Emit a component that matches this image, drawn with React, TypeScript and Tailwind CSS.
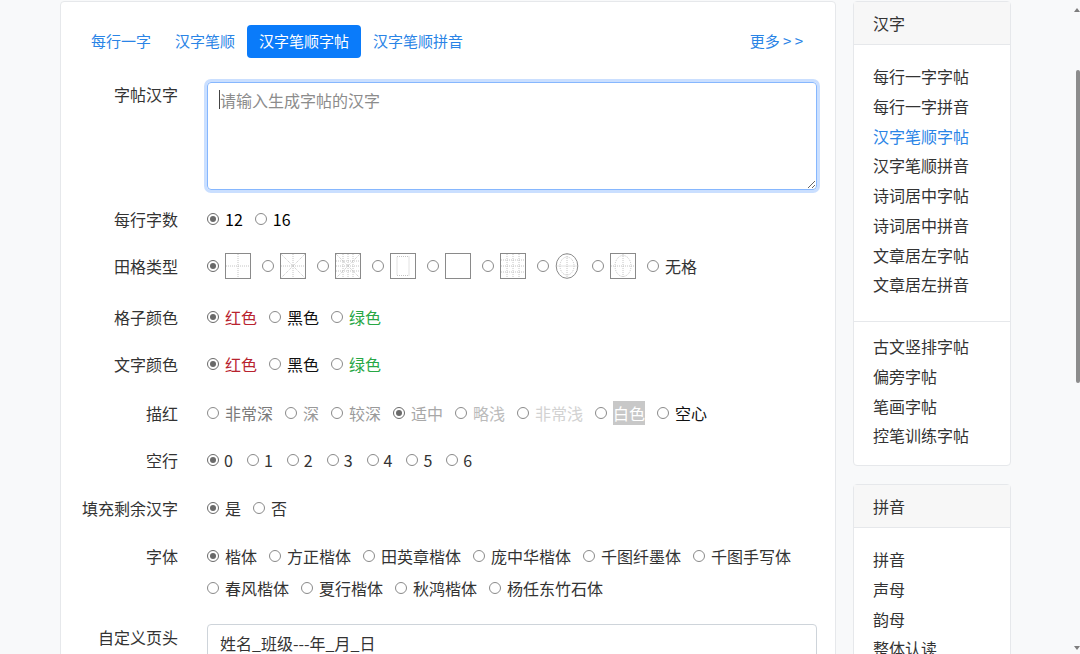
import React from "react";

const FONT = "font-['Noto_Sans_CJK_SC','Noto_Sans',sans-serif]";

function Radio({ checked = false }: { checked?: boolean }) {
  return (
    <span
      className={
        "inline-flex h-[12px] w-[12px] shrink-0 items-center justify-center rounded-full border bg-white " +
        (checked ? "border-[#6a6a6a] bg-[#ececec]" : "border-[#8a8a8a]")
      }
    >
      {checked && <span className="block h-[6px] w-[6px] rounded-full bg-[#6a6a6a]" />}
    </span>
  );
}

function Option({
  checked = false,
  children,
  className = "",
}: {
  checked?: boolean;
  children: React.ReactNode;
  className?: string;
}) {
  return (
    <label className="mr-[12px] inline-flex items-center gap-[6px] leading-6">
      <Radio checked={checked} />
      <span className={className}>{children}</span>
    </label>
  );
}

const dot = { stroke: "#b5b5b5", strokeWidth: 0.8, strokeDasharray: "1 1", fill: "none" } as const;
const frame = { stroke: "#8a8a8a", strokeWidth: 1, fill: "#fff" } as const;

function GridIcon({ kind }: { kind: number }) {
  if (kind === 6) {
    return (
      <svg width="26" height="26" viewBox="0 0 26 26">
        <ellipse cx="12" cy="13" rx="10.8" ry="12.3" {...frame} />
        <line x1="12" y1="1" x2="12" y2="25" {...dot} />
        <line x1="1.5" y1="13" x2="22.5" y2="13" {...dot} />
        <ellipse cx="12" cy="13" rx="7" ry="9" {...dot} />
      </svg>
    );
  }
  return (
    <svg width="26" height="26" viewBox="0 0 26 26">
      <rect x="0.5" y="0.5" width="25" height="25" {...frame} />
      {(kind === 0 || kind === 1 || kind === 2 || kind === 7) && (
        <>
          <line x1="13" y1="1" x2="13" y2="25" {...dot} />
          <line x1="1" y1="13" x2="25" y2="13" {...dot} />
        </>
      )}
      {(kind === 1 || kind === 2) && (
        <>
          <line x1="1" y1="1" x2="25" y2="25" {...dot} />
          <line x1="25" y1="1" x2="1" y2="25" {...dot} />
        </>
      )}
      {kind === 2 && (
        <>
          <line x1="8" y1="1" x2="8" y2="25" {...dot} />
          <line x1="18" y1="1" x2="18" y2="25" {...dot} />
          <line x1="1" y1="8" x2="25" y2="8" {...dot} />
          <line x1="1" y1="18" x2="25" y2="18" {...dot} />
        </>
      )}
      {kind === 3 && <rect x="7" y="3.5" width="12" height="19" {...dot} />}
      {kind === 5 && (
        <>
          <line x1="7" y1="1" x2="7" y2="25" {...dot} />
          <line x1="13" y1="1" x2="13" y2="25" {...dot} />
          <line x1="19" y1="1" x2="19" y2="25" {...dot} />
          <line x1="1" y1="7" x2="25" y2="7" {...dot} />
          <line x1="1" y1="13" x2="25" y2="13" {...dot} />
          <line x1="1" y1="19" x2="25" y2="19" {...dot} />
        </>
      )}
      {kind === 7 && <ellipse cx="13" cy="13" rx="8" ry="10.5" {...dot} />}
    </svg>
  );
}

function Row({
  label,
  mt,
  children,
  center = false,
}: {
  label: string;
  mt: string;
  children: React.ReactNode;
  center?: boolean;
}) {
  return (
    <div className={"flex " + (center ? "items-center " : "items-start ") + mt}>
      <div className="w-[116px] shrink-0 pr-[17px] text-right leading-6 text-[#333]">{label}</div>
      <div className="ml-[12px] flex flex-1 flex-wrap items-center">{children}</div>
    </div>
  );
}

const tabs = ["每行一字", "汉字笔顺", "汉字笔顺字帖", "汉字笔顺拼音"];

const hanziLinks = [
  "每行一字字帖",
  "每行一字拼音",
  "汉字笔顺字帖",
  "汉字笔顺拼音",
  "诗词居中字帖",
  "诗词居中拼音",
  "文章居左字帖",
  "文章居左拼音",
];
const moreLinks = ["古文竖排字帖", "偏旁字帖", "笔画字帖", "控笔训练字帖"];
const pinyinLinks = ["拼音", "声母", "韵母", "整体认读"];

const fonts1 = ["楷体", "方正楷体", "田英章楷体", "庞中华楷体", "千图纤墨体", "千图手写体"];
const fonts2 = ["春风楷体", "夏行楷体", "秋鸿楷体", "杨任东竹石体"];

export default function App() {
  return (
    <div className={"relative h-[654px] overflow-hidden bg-[#f8f9fa] text-[16px] " + FONT}>
      <div className="flex items-start gap-[17px] pl-[60px] pt-[1px]">
        {/* main form card */}
        <main className="h-[700px] w-[776px] shrink-0 rounded-[4px] border border-[#e6e8eb] bg-white px-[18px] pt-[23px]">
          <nav className="flex h-[33px] items-center text-[15px]">
            {tabs.map((t, i) => (
              <a
                key={t}
                className={
                  "flex h-[33px] items-center rounded-[4px] px-3 " +
                  (i === 2 ? "bg-[#0a7bfa] text-white" : "text-[#2a84e6]")
                }
              >
                {t}
              </a>
            ))}
            <a className="ml-auto mr-[2px] flex h-[33px] items-center px-3 text-[#2a84e6]">更多 &gt; &gt;</a>
          </nav>

          <div className="mt-[24px] flex items-start">
            <div className="w-[116px] shrink-0 pr-[17px] text-right leading-6 text-[#333]">字帖汉字</div>
            <div className="relative ml-[12px] flex-1">
              <textarea
                className="block h-[108px] w-full rounded-[4px] border border-[#86b7fe] px-3 pb-[7px] pt-[5px] leading-6 text-[#333] shadow-[0_0_0_3px_rgba(13,110,253,0.22)] outline-none placeholder:text-[#8c8c8c]"
                placeholder="请输入生成字帖的汉字"
              />
              <span className="absolute left-[12px] top-[8px] h-[19px] w-px bg-[#444]" />
            </div>
          </div>

          <Row label="每行字数" mt="mt-[17px]">
            <Option checked>12</Option>
            <Option>16</Option>
          </Row>

          <Row label="田格类型" mt="mt-[21px]" center>
            {[0, 1, 2, 3, 4, 5, 6, 7].map((k) => (
              <label key={k} className="mr-[11px] inline-flex h-[27px] items-center gap-[6px]">
                <Radio checked={k === 0} />
                <GridIcon kind={k} />
              </label>
            ))}
            <Option className="text-[#333]">无格</Option>
          </Row>

          <Row label="格子颜色" mt="mt-[26px]">
            <Option checked className="text-[#b8232f]">红色</Option>
            <Option className="text-[#111]">黑色</Option>
            <Option className="text-[#28a745]">绿色</Option>
          </Row>

          <Row label="文字颜色" mt="mt-[23px]">
            <Option checked className="text-[#b8232f]">红色</Option>
            <Option className="text-[#111]">黑色</Option>
            <Option className="text-[#28a745]">绿色</Option>
          </Row>

          <Row label="描红" mt="mt-[25px]">
            <Option className="text-[#7a7a7a]">非常深</Option>
            <Option className="text-[#999]">深</Option>
            <Option className="text-[#9a9a9a]">较深</Option>
            <Option checked className="text-[#a8a8a8]">适中</Option>
            <Option className="text-[#bbb]">略浅</Option>
            <Option className="text-[#d2d2d2]">非常浅</Option>
            <Option className="bg-[#c8c8c8] text-white">白色</Option>
            <Option className="text-[#111]">空心</Option>
          </Row>

          <Row label="空行" mt="mt-[23px]">
            {["0", "1", "2", "3", "4", "5", "6"].map((n, i) => (
              <label key={n} className="mr-[14px] inline-flex items-center gap-[5px] leading-6">
                <Radio checked={i === 0} />
                <span className="text-[#333]">{n}</span>
              </label>
            ))}
          </Row>

          <Row label="填充剩余汉字" mt="mt-[24px]">
            <Option checked className="text-[#333]">是</Option>
            <Option className="text-[#333]">否</Option>
          </Row>

          <Row label="字体" mt="mt-[24px]">
            <div className="flex flex-col gap-[8px]">
              <div className="flex items-center">
                {fonts1.map((f, i) => (
                  <Option key={f} checked={i === 0} className="text-[#333]">
                    {f}
                  </Option>
                ))}
              </div>
              <div className="flex items-center">
                {fonts2.map((f) => (
                  <Option key={f} className="text-[#333]">
                    {f}
                  </Option>
                ))}
              </div>
            </div>
          </Row>

          <div className="mt-[24px] flex items-start">
            <div className="w-[116px] shrink-0 pr-[17px] pt-px text-right leading-6 text-[#333]">自定义页头</div>
            <div className="ml-[12px] flex-1">
              <input
                readOnly
                defaultValue="姓名_班级---年_月_日"
                className="block h-[38px] w-full rounded-[4px] border border-[#ced4da] px-3 text-[#333] outline-none"
              />
            </div>
          </div>
        </main>

        {/* side navigation */}
        <aside className="flex w-[158px] shrink-0 flex-col gap-[18px] text-[#333]">
          <section className="rounded-[4px] border border-[#e6e8eb] bg-white">
            <header className="flex h-[43px] items-center border-b border-[#e6e8eb] bg-[#f7f7f7] px-[19px]">汉字</header>
            <ul className="px-[19px] pb-[21px] pt-[17px]">
              {hanziLinks.map((t, i) => (
                <li key={t} className={"leading-[29.75px] " + (i === 2 ? "text-[#2a84e6]" : "")}>
                  {t}
                </li>
              ))}
            </ul>
            <ul className="border-t border-[#e6e8eb] px-[19px] pb-[14px] pt-[10px]">
              {moreLinks.map((t) => (
                <li key={t} className="leading-[29.75px]">
                  {t}
                </li>
              ))}
            </ul>
          </section>
          <section className="rounded-[4px] border border-[#e6e8eb] bg-white">
            <header className="flex h-[43px] items-center border-b border-[#e6e8eb] bg-[#f7f7f7] px-[19px]">拼音</header>
            <ul className="px-[19px] pb-[14px] pt-[17px]">
              {pinyinLinks.map((t) => (
                <li key={t} className="leading-[29.75px]">
                  {t}
                </li>
              ))}
            </ul>
          </section>
        </aside>
      </div>

      {/* window scrollbar */}
      <div className="pointer-events-none absolute right-0 top-0 h-full w-[5px]">
        <span className="absolute right-0 top-[8px] h-0 w-0 border-x-[3px] border-b-[4px] border-x-transparent border-b-[#7d7d7d]" />
        <span className="absolute right-0 top-[70px] h-[313px] w-[4px] rounded-[2px] bg-[#8c8c8c]" />
        <span className="absolute bottom-[4px] right-0 h-0 w-0 border-x-[3px] border-t-[4px] border-x-transparent border-t-[#7d7d7d]" />
      </div>
    </div>
  );
}
